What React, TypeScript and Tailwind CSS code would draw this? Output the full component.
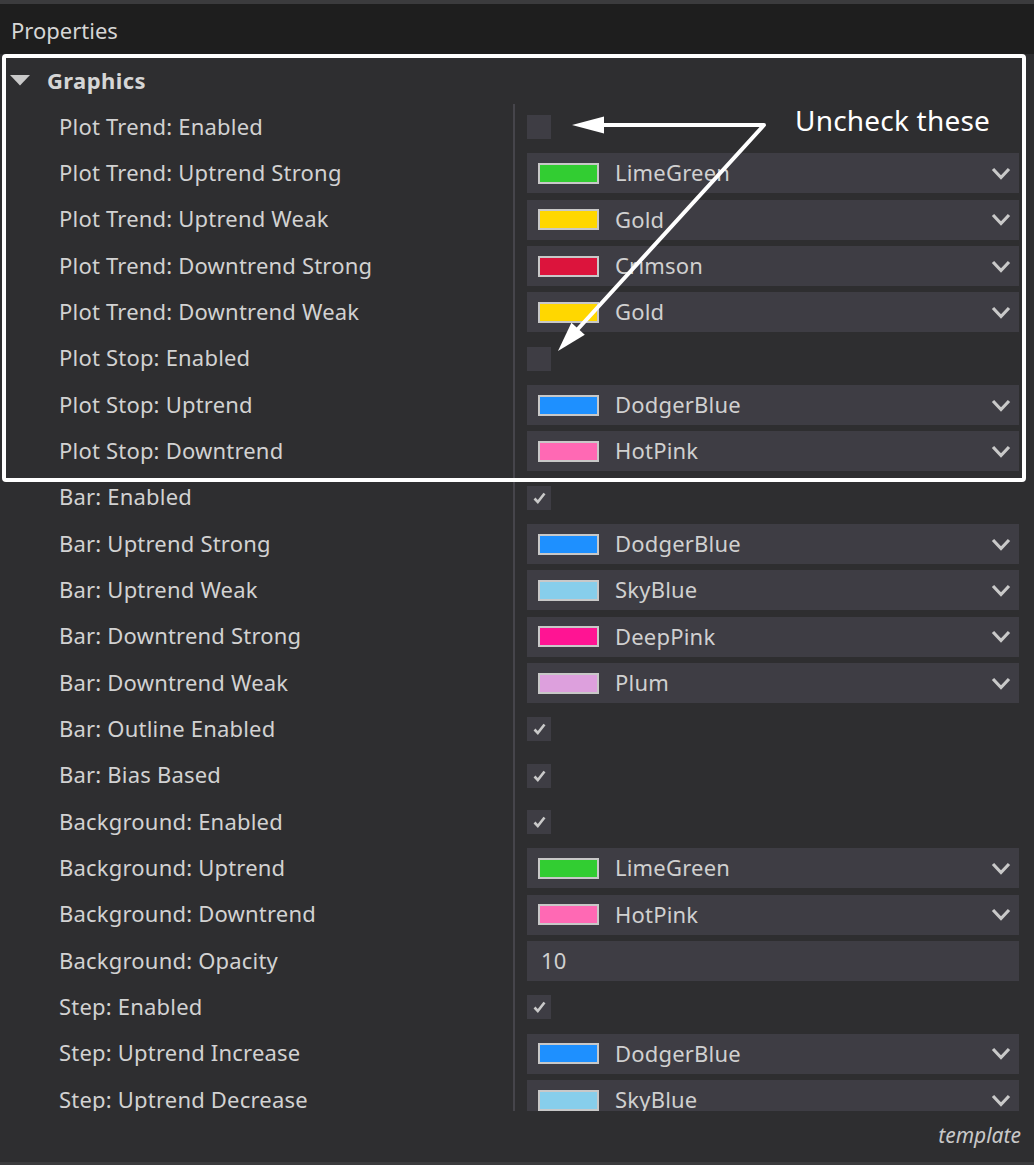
import React from "react";

type Row =
  | { l: string; t: "check"; v: boolean }
  | { l: string; t: "color"; c: string; n: string }
  | { l: string; t: "text"; v: string };

const rows: Row[] = [
  { l: "Plot Trend: Enabled", t: "check", v: false },
  { l: "Plot Trend: Uptrend Strong", t: "color", c: "#32cd32", n: "LimeGreen" },
  { l: "Plot Trend: Uptrend Weak", t: "color", c: "#ffd700", n: "Gold" },
  { l: "Plot Trend: Downtrend Strong", t: "color", c: "#dc143c", n: "Crimson" },
  { l: "Plot Trend: Downtrend Weak", t: "color", c: "#ffd700", n: "Gold" },
  { l: "Plot Stop: Enabled", t: "check", v: false },
  { l: "Plot Stop: Uptrend", t: "color", c: "#1e90ff", n: "DodgerBlue" },
  { l: "Plot Stop: Downtrend", t: "color", c: "#ff69b4", n: "HotPink" },
  { l: "Bar: Enabled", t: "check", v: true },
  { l: "Bar: Uptrend Strong", t: "color", c: "#1e90ff", n: "DodgerBlue" },
  { l: "Bar: Uptrend Weak", t: "color", c: "#87ceeb", n: "SkyBlue" },
  { l: "Bar: Downtrend Strong", t: "color", c: "#ff1493", n: "DeepPink" },
  { l: "Bar: Downtrend Weak", t: "color", c: "#dda0dd", n: "Plum" },
  { l: "Bar: Outline Enabled", t: "check", v: true },
  { l: "Bar: Bias Based", t: "check", v: true },
  { l: "Background: Enabled", t: "check", v: true },
  { l: "Background: Uptrend", t: "color", c: "#32cd32", n: "LimeGreen" },
  { l: "Background: Downtrend", t: "color", c: "#ff69b4", n: "HotPink" },
  { l: "Background: Opacity", t: "text", v: "10" },
  { l: "Step: Enabled", t: "check", v: true },
  { l: "Step: Uptrend Increase", t: "color", c: "#1e90ff", n: "DodgerBlue" },
  { l: "Step: Uptrend Decrease", t: "color", c: "#87ceeb", n: "SkyBlue" },
];

const Chevron = () => (
  <svg width="20" height="13" viewBox="0 0 20 13" className="shrink-0">
    <polyline points="2,2 10,10.5 18,2" fill="none" stroke="#c9c9c9" strokeWidth="3.2" />
  </svg>
);

const Check = () => (
  <svg width="13" height="12" viewBox="0 0 13 12">
    <polyline points="1.5,6.5 4.8,10 11.5,1.5" fill="none" stroke="#c9c9c9" strokeWidth="2.6" />
  </svg>
);

function Value({ r }: { r: Row }) {
  if (r.t === "check") {
    return (
      <div className="w-[24px] h-[24px] bg-[#3e3d44] flex items-center justify-center">
        {r.v && <Check />}
      </div>
    );
  }
  if (r.t === "text") {
    return (
      <div className="w-[492px] h-[40px] bg-[#3e3d44] flex items-center pl-[14px] pb-[2px] text-[#d0d0d0]">
        {r.v}
      </div>
    );
  }
  return (
    <div className="w-[492px] h-[40px] bg-[#3e3d44] flex items-center pl-[11px] pr-[8px]">
      <div className="w-[61px] h-[21px] border-2 border-[#c8c8c8] shrink-0" style={{ backgroundColor: r.c }} />
      <span className="ml-[16px] flex-1 pb-[2px] text-[#d0d0d0]">{r.n}</span>
      <Chevron />
    </div>
  );
}

export default function App() {
  return (
    <div
      className="relative w-[1034px] h-[1165px] flex flex-col bg-[#2e2e30] text-[22px] leading-[22px] tracking-[0.2px] overflow-hidden"
      style={{ fontFamily: '"Noto Sans", "Open Sans", sans-serif' }}
    >
      <div className="h-[4px] bg-[#3b3b3d] shrink-0" />
      <div className="h-[50px] bg-[#1e1e1e] shrink-0 flex items-center pl-[11px] pt-[2px] text-[#d6d6d6] tracking-normal">
        Properties
      </div>
      <div className="h-[50px] shrink-0 flex items-center pt-[2px]">
        <svg width="20" height="11" viewBox="0 0 20 11" className="ml-[10px]">
          <polygon points="0,0 20,0 10,10.5" fill="#c9c9c9" />
        </svg>
        <span className="ml-[17px] font-bold text-[#d6d6d6] tracking-[0.4px]">Graphics</span>
      </div>
      <div className="h-[1007px] shrink-0 overflow-hidden">
        {rows.map((r, i) => (
          <div key={i} className="h-[46.33px] flex items-stretch">
            <div className="w-[513px] shrink-0 flex items-center pl-[59px] pb-[3px] text-[#d2d2d2]">{r.l}</div>
            <div className="w-[2px] bg-[#46454b] shrink-0" />
            <div className="flex-1 flex items-center pl-[12px]">
              <Value r={r} />
            </div>
          </div>
        ))}
      </div>
      <div className="flex-1 flex items-center justify-end pr-[13px] pb-[3px] italic text-[21px] tracking-normal text-[#c8c8c8]">
        template
      </div>
      <div className="h-[3px] bg-[#3b3b3d] shrink-0" />

      {/* annotation overlay */}
      <div className="absolute left-[2px] top-[54px] w-[1024px] h-[428px] border-[4px] border-white rounded-[4px] pointer-events-none" />
      <div className="absolute left-[795px] top-[105px] text-[28px] leading-[30px] tracking-[0.2px] text-white pointer-events-none">
        Uncheck these
      </div>
      <svg className="absolute left-0 top-0 pointer-events-none" width="1034" height="1165">
        <polyline points="600,125 764,125 577,330" fill="none" stroke="#fff" strokeWidth="4" strokeLinejoin="round" />
        <polygon points="572,125 604,116.5 604,133.5" fill="#fff" />
        <polygon points="558,351 571.4,322.7 584.8,334.7" fill="#fff" />
      </svg>
    </div>
  );
}
